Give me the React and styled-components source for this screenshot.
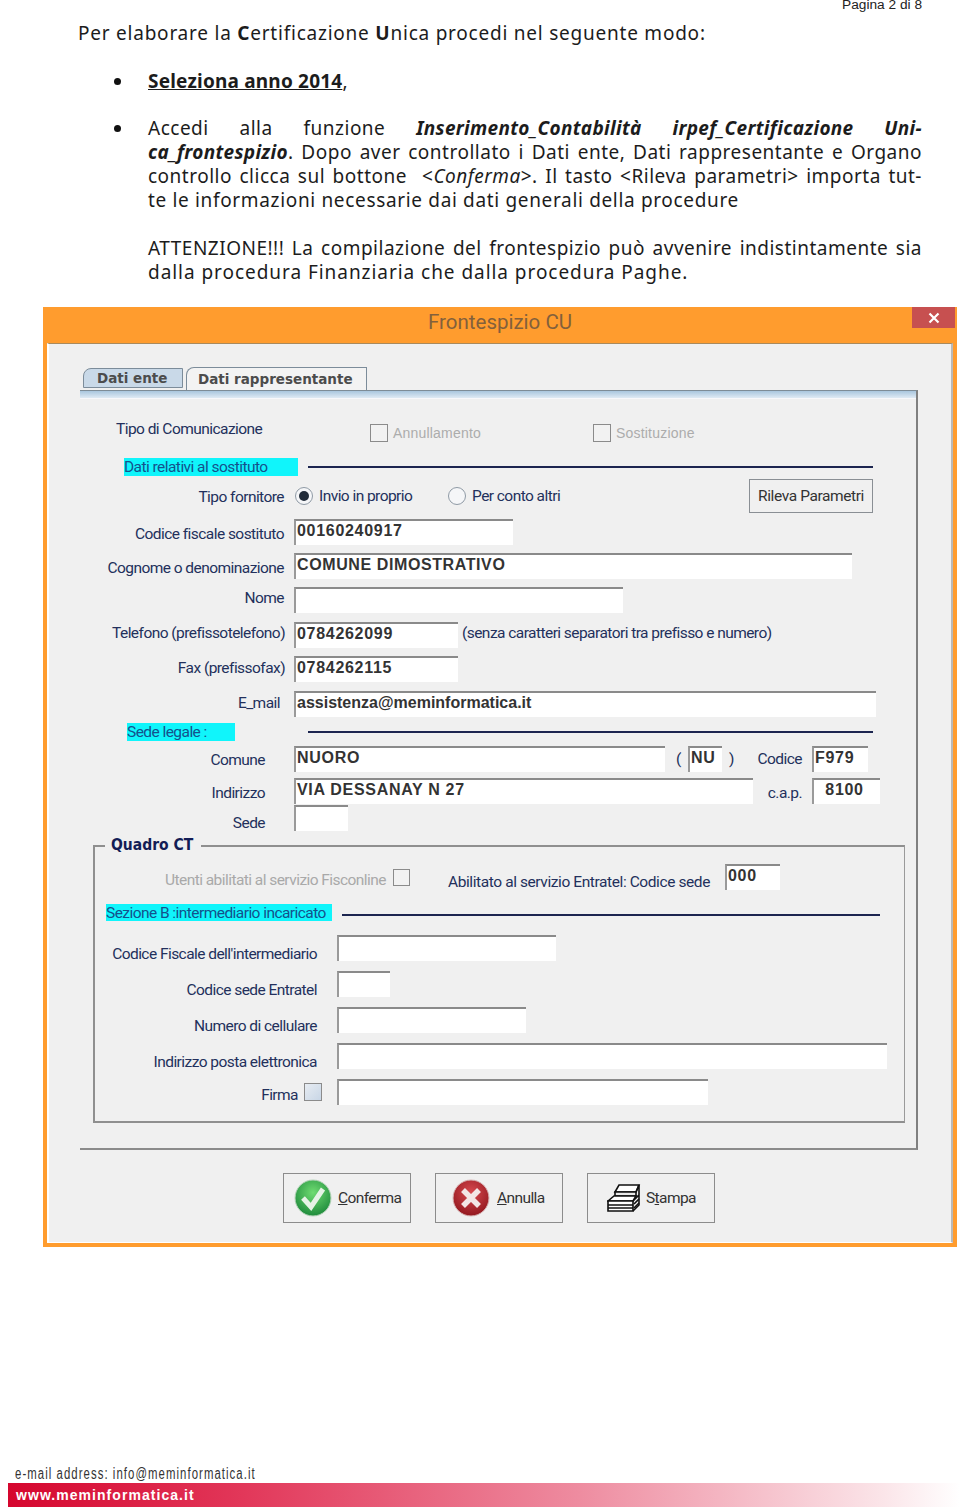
import React from "react";
import styled, { createGlobalStyle } from "styled-components";

const Global = createGlobalStyle`
  html, body { margin: 0; padding: 0; background: #fff; }
  body { width: 960px; height: 1511px; overflow: hidden; }
`;
const Page = styled.div`
  width: 960px; height: 1511px; display: flex; flex-direction: column; overflow: hidden;
  font-family: "Noto Sans", "Liberation Sans", sans-serif; color: #1c1c1c;
`;
const PageNo = styled.div`
  height: 10px; padding-right: 38px; text-align: right;
  font: 13.7px/10px "Liberation Sans", Arial, sans-serif; color: #222;
`;
const Intro = styled.div`
  margin: 11px 0 0 78px; font-size: 19px; line-height: 24px; letter-spacing: .77px; height: 24px; white-space: nowrap;
`;
const List = styled.ul`
  list-style: none; margin: 24px 0 0; padding: 0 38px 0 0; font-size: 19px; line-height: 24px;
`;
const Item = styled.li`
  position: relative; margin: 0 0 ${p => p.$mb || 0}px 148px;
  &::before { content: ""; position: absolute; left: -34px; top: 9px; width: 7px; height: 7px; border-radius: 50%; background: #111; }
`;
const Line = styled.div`
  white-space: nowrap; letter-spacing: ${p => p.$ls ?? .5}px; height: 24px;
  ${p => p.$just ? "text-align: justify; text-align-last: justify; white-space: normal;" : ""}
`;
const Para = styled.div`
  margin: 24px 0 0 148px; padding-right: 38px; font-size: 19px; line-height: 24px;
`;
const Strong = styled.b`font-weight: 700;`;
const Key = styled.b`font-style: italic; font-weight: 700; letter-spacing: .3px;`;
const Under = styled.u`font-weight: 700; letter-spacing: .2px;`;
const Dialog = styled.div`
  margin: 23px 0 0 43px; width: 914px; height: 940px; box-sizing: border-box; background: #ff9c2e;
  padding: 0 4px 4px; display: flex; flex-direction: column;
`;
const TitleBar = styled.div`
  position: relative; height: 36px; flex: none; display: flex; align-items: center; justify-content: center;
  font: 20.5px/28px Roboto, "Noto Sans", sans-serif; color: #83603c; padding-bottom: 7px; box-sizing: border-box;
`;
const Close = styled.span`
  position: absolute; right: -2px; top: 0; width: 43px; height: 21px; background: #c75050;
  display: flex; align-items: center; justify-content: center;
`;
const Client = styled.div`
  flex: 1; background: #f0f0f0; border-top: 1px solid #a98a5c; border-left: 2px solid #fff; border-right: 2px solid #b9b9b9;
  border-bottom: 1px solid #fff; box-sizing: border-box; padding: 23px 0 0 31px;
`;
const Tabs = styled.div`display: flex; align-items: flex-end; height: 23px;`;
const Tab = styled.div`
  box-sizing: border-box; height: ${p => p.$active ? 20 : 23}px; width: ${p => p.$w}px; margin: 0 0 ${p => p.$active ? 2 : 0}px ${p => p.$ml}px;
  border: 1px solid #7c8c9a; border-top-left-radius: 8px; border-bottom: ${p => p.$active ? "1px solid #7c8c9a" : "none"};
  background: ${p => p.$active ? "#c9d9e8" : "#f3f3f3"}; padding-left: ${p => p.$pl}px;
  font: 700 13.5px/${p => p.$active ? 19 : 22}px "DejaVu Sans", Verdana, sans-serif; color: #4c4c4c; white-space: nowrap;
`;
const Panel = styled.div`
  width: 838px; height: 760px; box-sizing: border-box; border-top: 1px solid #7e8c97;
  border-right: 2px solid #808080; border-bottom: 2px solid #8b8b8b; background: #f0f0f0;
`;
const Strip = styled.div`height: 7px; background: linear-gradient(#a9c6de, #dfeaf4); border-bottom: 1px solid #f8f8fb;`;
const Row = styled.div`
  display: flex; align-items: center; height: ${p => p.$h || 26}px; margin-top: ${p => p.$mt || 0}px;
`;
const Label = styled.span`
  flex: none; box-sizing: border-box; width: ${p => p.$w}px; margin: ${p => p.$dn || 0}px 0 ${p => p.$up || 0}px ${p => p.$ml || 0}px;
  text-align: ${p => p.$left ? "left" : "right"}; white-space: nowrap;
  font: 15.5px/20px Roboto, "Liberation Sans", sans-serif; letter-spacing: ${p => p.$ls ?? -.55}px; color: ${p => p.$muted ? "#a9a9a9" : "#23305c"};
`;
const Dim = styled.span`
  flex: none; width: ${p => p.$w}px; margin-left: 5px; white-space: nowrap;
  font: 14px/18px "Liberation Sans", sans-serif; color: #acacac; letter-spacing: .2px;
`;
const Field = styled.div`
  flex: none; box-sizing: border-box; width: ${p => p.$w}px; height: 26px; margin-left: ${p => p.$ml || 0}px; background: #fff;
  border-top: 2px solid #8a8a8a; border-left: 2px solid #9a9a9a; padding-left: 1px;
  font: 700 16px/20px "Liberation Sans", sans-serif; letter-spacing: ${p => p.$ls ?? .7}px; color: #333; white-space: nowrap; overflow: hidden;
`;
const Box = styled.span`
  flex: none; box-sizing: border-box; width: ${p => p.$s || 18}px; height: ${p => p.$s || 18}px; margin-left: ${p => p.$ml || 0}px;
  border: 1.5px solid #8b8b8b; background: ${p => p.$fill ? "linear-gradient(135deg,#e7ecf2,#c8d6e6)" : "#f2f2f2"};
`;
const Radio = styled.span`
  flex: none; box-sizing: border-box; width: 18px; height: 18px; margin-left: ${p => p.$ml || 0}px; border-radius: 50%;
  border: 1.5px solid #8f9aa5; background: #f5f6f8; display: flex; align-items: center; justify-content: center;
  &::after { content: ""; width: 10px; height: 10px; border-radius: 50%; background: ${p => p.$on ? "#222c3a" : "transparent"}; }
`;
const Band = styled.span`
  flex: none; box-sizing: border-box; width: ${p => p.$w}px; height: ${p => p.$hh || 18}px; margin-left: ${p => p.$ml}px; background: #10f5fb;
  font: 15.5px/18px Roboto, sans-serif; letter-spacing: -.55px; color: #14518c; white-space: nowrap; padding-left: ${p => p.$pl || 0}px;
`;
const Rule = styled.span`
  flex: none; width: ${p => p.$w}px; height: 2px; margin: ${p => p.$dn || 0}px 0 0 ${p => p.$ml}px; background: #1c2550;
`;
const Parameter = styled.div`
  flex: none; box-sizing: border-box; width: 124px; height: 34px; border: 1.5px solid #8a8f94; background: #f0f0f0;
  display: flex; align-items: center; justify-content: center; font: 15.5px/20px Roboto, sans-serif; letter-spacing: -.4px; color: #333;
`;
const Group = styled.div`
  position: relative; box-sizing: border-box; width: 812px; height: 278px; margin: 14px 0 0 13px;
  border-top: 2px solid #8f8f8f; border-left: 2px solid #8f8f8f; border-right: 1px solid #9a9a9a; border-bottom: 2px solid #8f8f8f;
`;
const Legend = styled.span`
  position: absolute; left: 10px; top: -12px; padding: 0 8px 0 6px; background: #f0f0f0;
  font: 700 15.5px/20px "DejaVu Sans Condensed", "DejaVu Sans", sans-serif; color: #131d56;
`;
const Footer = styled.div`display: flex; flex-direction: column; margin-top: 219px;`;
const Mail = styled.div`
  margin-left: 15px; height: 17px; font: 16px/15px "Liberation Sans", sans-serif; letter-spacing: 1.5px; color: #333;
  transform: scaleX(.71); transform-origin: left; white-space: nowrap;
`;
const Brand = styled.div`
  margin-left: 8px; height: 24px; box-sizing: border-box; padding-left: 8px;
  background: linear-gradient(90deg, #d5062e 0%, #e2385a 25%, #ee8ca0 60%, #fbe5e9 92%, #fff 100%);
  font: 700 14px/24px "Liberation Sans", sans-serif; letter-spacing: 1.05px; color: #fff; white-space: nowrap;
`;
const Actions = styled.div`display: flex; gap: 24px; margin: 23px 0 0 203px;`;
const Action = styled.div`
  box-sizing: border-box; width: 128px; height: 50px; border: 1.5px solid #8c8c8c; display: flex; align-items: center; gap: ${p => p.$gap}px;
  padding-left: ${p => p.$pl}px; font: 15.5px/20px Roboto, sans-serif; letter-spacing: -.6px; color: #333;
`;

const OkIcon = () => (
  <svg width="38" height="38" viewBox="0 0 38 38">
    <defs><radialGradient id="g" cx="50%" cy="35%" r="65%"><stop offset="0" stopColor="#6fdc72" /><stop offset="1" stopColor="#1f8b3c" /></radialGradient></defs>
    <circle cx="19" cy="19" r="18" fill="url(#g)" stroke="#b7d4bb" />
    <path d="M9 19l8 9L29 10" fill="none" stroke="#e6f3e6" strokeWidth="5" />
  </svg>
);
const NoIcon = () => (
  <svg width="38" height="38" viewBox="0 0 38 38">
    <defs><radialGradient id="r" cx="50%" cy="35%" r="65%"><stop offset="0" stopColor="#d84a50" /><stop offset="1" stopColor="#93181f" /></radialGradient></defs>
    <circle cx="19" cy="19" r="18" fill="url(#r)" stroke="#d8b8b8" />
    <path d="M11 11l16 16M27 11L11 27" stroke="#f3e6e6" strokeWidth="5.5" />
  </svg>
);
const PrintIcon = () => (
  <svg width="34" height="30" viewBox="0 0 34 30" fill="none" stroke="#111" strokeWidth="1.6">
    <path d="M8 9l4-7h20l-3 7z" fill="#fff" />
    <path d="M8 9h21v4H8z" fill="#e8e8e8" />
    <path d="M1 18l6-5h22l-3 5z" fill="#fff" />
    <path d="M1 18h25v10H1z" fill="#fff" />
    <path d="M1 22h25M1 25h25M26 18l6-6V22l-6 6M29 9l3-7v10" />
    <path d="M27 21l5-5M27 25l5-5" />
  </svg>
);

export default function App() {
  return (
    <Page>
      <Global />
      <PageNo>Pagina 2 di 8</PageNo>
      <Intro>Per elaborare la <Strong>C</Strong>ertificazione <Strong>U</Strong>nica procedi nel seguente modo:</Intro>
      <List>
        <Item $mb={23}><Line><Under>Seleziona anno 2014</Under>,</Line></Item>
        <Item>
          <Line $just>Accedi alla funzione <Key>Inserimento_Contabilità</Key> <Key>irpef_Certificazione</Key> <Key>Uni-</Key></Line>
          <Line $just><Key>ca_frontespizio</Key>. Dopo aver controllato i Dati ente, Dati rappresentante e Organo</Line>
          <Line $just>controllo clicca sul bottone &nbsp;&lt;<i>Conferma</i>&gt;. Il tasto &lt;Rileva parametri&gt; importa tut-</Line>
          <Line $ls={.66}>te le informazioni necessarie dai dati generali della procedure</Line>
        </Item>
      </List>
      <Para>
        <Line $just>ATTENZIONE!!! La compilazione del frontespizio può avvenire indistintamente sia</Line>
        <Line $ls={.95}>dalla procedura Finanziaria che dalla procedura Paghe.</Line>
      </Para>
      <Dialog>
        <TitleBar>
          Frontespizio CU
          <Close>
            <svg width="12" height="12" viewBox="0 0 12 12"><path d="M1.5 1.5l9 9M10.5 1.5l-9 9" stroke="#fff" strokeWidth="2.2" /></svg>
          </Close>
        </TitleBar>
        <Client>
          <Tabs>
            <Tab $active $w={100} $ml={3} $pl={13}>Dati ente</Tab>
            <Tab $w={181} $ml={3} $pl={11}>Dati rappresentante</Tab>
          </Tabs>
          <Panel>
            <Strip />
            <Row $h={22} $mt={23}>
              <Label $left $w={180} $ml={36} $up={8}>Tipo di Comunicazione</Label>
              <Box $ml={74} />
              <Dim $w={200}>Annullamento</Dim>
              <Box $ml={0} />
              <Dim $w={100}>Sostituzione</Dim>
            </Row>
            <Row $h={18} $mt={14}>
              <Band $ml={44} $w={174}>Dati relativi al sostituto</Band>
              <Rule $ml={10} $w={565} />
            </Row>
            <Row $h={34} $mt={3}>
              <Label $w={204} $dn={2}>Tipo fornitore</Label>
              <Radio $on $ml={11} />
              <Label $left $w={129} $ml={6}>Invio in proprio</Label>
              <Radio />
              <Label $left $w={277} $ml={6}>Per conto altri</Label>
              <Parameter>Rileva Parametri</Parameter>
            </Row>
            <Row $mt={6}><Label $w={204} $dn={4}>Codice fiscale sostituto</Label><Field $ml={10} $w={219}>00160240917</Field></Row>
            <Row $mt={8}><Label $w={204} $dn={4}>Cognome o denominazione</Label><Field $ml={10} $w={558} $ls={.6}>COMUNE DIMOSTRATIVO</Field></Row>
            <Row $mt={8}><Label $w={204} $up={4}>Nome</Label><Field $ml={10} $w={329} /></Row>
            <Row $mt={9}>
              <Label $w={205} $up={4}>Telefono (prefissotelefono)</Label><Field $ml={9} $w={164}>0784262099</Field>
              <Label $left $w={340} $ml={4} $up={4}>(senza caratteri separatori tra prefisso e numero)</Label>
            </Row>
            <Row $mt={8}><Label $w={205} $up={2}>Fax (prefissofax)</Label><Field $ml={9} $w={164}>0784262115</Field></Row>
            <Row $mt={9}><Label $w={200} $up={2}>E_mail</Label><Field $ml={14} $w={582} $ls={0}>assistenza@meminformatica.it</Field></Row>
            <Row $h={18} $mt={6}>
              <Band $ml={47} $w={108}>Sede legale :</Band>
              <Rule $ml={73} $w={565} />
            </Row>
            <Row $mt={5}>
              <Label $w={185} $dn={2}>Comune</Label><Field $ml={29} $w={371}>NUORO</Field>
              <Label $left $w={12} $ml={11}>(</Label><Field $w={34}>NU</Field>
              <Label $left $w={28} $ml={7}>)</Label>
              <Label $w={45}>Codice</Label><Field $ml={10} $w={56}>F979</Field>
            </Row>
            <Row $mt={6}>
              <Label $w={185} $dn={4}>Indirizzo</Label><Field $ml={29} $w={459}>VIA DESSANAY N 27</Field>
              <Label $w={49} $dn={4}>c.a.p.</Label><Field $ml={10} $w={68}>&nbsp; 8100</Field>
            </Row>
            <Row $mt={1}><Label $w={185} $dn={10}>Sede</Label><Field $ml={29} $w={54} /></Row>
            <Group>
              <Legend>Quadro CT</Legend>
              <Row $mt={17}>
                <Label $muted $w={291} $dn={6}>Utenti abilitati al servizio Fisconline</Label>
                <Box $s={17} $ml={7} />
                <Label $left $w={262} $ml={38} $dn={10} $ls={-.41}>Abilitato al servizio Entratel: Codice sede</Label>
                <Field $ml={15} $w={55}>000</Field>
              </Row>
              <Row $h={17} $mt={14}>
                <Band $ml={11} $w={226} $hh={17}>Sezione B :intermediario incaricato</Band>
                <Rule $ml={10} $w={538} $dn={5} />
              </Row>
              <Row $mt={14}><Label $w={222} $dn={12}>Codice Fiscale dell'intermediario</Label><Field $ml={20} $w={219} /></Row>
              <Row $mt={10}><Label $w={222} $dn={12}>Codice sede Entratel</Label><Field $ml={20} $w={53} /></Row>
              <Row $mt={10}><Label $w={222} $dn={12}>Numero di cellulare</Label><Field $ml={20} $w={189} /></Row>
              <Row $mt={10}><Label $w={222} $dn={12}>Indirizzo posta elettronica</Label><Field $ml={20} $w={550} /></Row>
              <Row $mt={10}><Label $w={203} $dn={6}>Firma</Label><Box $fill $ml={6} /><Field $ml={15} $w={371} /></Row>
            </Group>
          </Panel>
          <Actions>
            <Action $pl={10} $gap={6}><OkIcon /><span><u>C</u>onferma</span></Action>
            <Action $pl={16} $gap={7}><NoIcon /><span><u>A</u>nnulla</span></Action>
            <Action $pl={19} $gap={5}><PrintIcon /><span>S<u>t</u>ampa</span></Action>
          </Actions>
        </Client>
      </Dialog>
      <Footer>
        <Mail>e-mail address: info@meminformatica.it</Mail>
        <Brand>www.meminformatica.it</Brand>
      </Footer>
    </Page>
  );
}
